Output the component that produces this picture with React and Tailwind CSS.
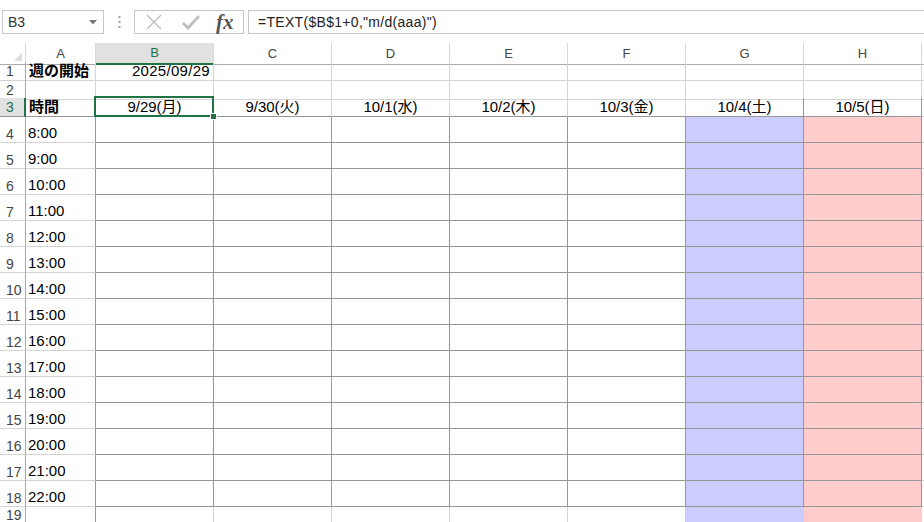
// 週間スケジュール表 — Excel 風のシート画面
import clsx from 'clsx'

const COLS = ['A', 'B', 'C', 'D', 'E', 'F', 'G', 'H']
const DAYS = ['9/29(月)', '9/30(火)', '10/1(水)', '10/2(木)', '10/3(金)', '10/4(土)', '10/5(日)']
const TIMES = Array.from({ length: 15 }, (_, i) => `${i + 8}:00`)

const ROW = 'grid grid-cols-[26px_70px_repeat(7,118px)_1fr]'
const LIGHT = 'border-r border-b border-[#d4d4d4]'
const DARK = 'border-r border-b border-[#969696]'

function RowHead({ n, active, className }) {
  return (
    <div className={clsx(
      'border-b border-[#d4d4d4] flex items-end pl-[6px] text-[14px]',
      active ? 'bg-[#e1e1e1] text-[#217346] border-r-2 border-r-[#217346]' : 'text-[#444] border-r border-r-[#a8a8a8]',
      className ?? 'leading-[18px]'
    )}>
      {n}
    </div>
  )
}

function Cell({ className, children }) {
  return (
    <div className={clsx('flex items-end overflow-hidden whitespace-nowrap leading-[18px]', className)}>
      {children}
    </div>
  )
}

export default function App() {
  return (
    <div className="w-[924px] h-[522px] overflow-hidden bg-white text-black text-[15px] font-['Liberation_Sans','Noto_Sans_CJK_JP',sans-serif]">

      {/* 名前ボックス＋数式バー */}
      <div className="h-[43px] flex items-start pt-[10px]">
        <div className="ml-[2px] w-[102px] h-[24px] border border-[#c6c6c6] flex items-center justify-between pl-[5px] pr-[6px] text-[14px] text-[#333]">
          <span>B3</span>
          <svg width="8" height="5" viewBox="0 0 8 5"><path d="M0 0h8L4 4.5z" fill="#777" /></svg>
        </div>
        <div className="w-[30px] h-[24px] flex items-center justify-center">
          <svg width="3" height="12" viewBox="0 0 3 12">
            <rect x="0.5" y="0" width="2" height="2" fill="#a0a0a0" />
            <rect x="0.5" y="5" width="2" height="2" fill="#a0a0a0" />
            <rect x="0.5" y="10" width="2" height="2" fill="#a0a0a0" />
          </svg>
        </div>
        <div className="w-[110px] h-[24px] border border-[#c6c6c6] flex items-center">
          <svg className="ml-[10px]" width="18" height="18" viewBox="0 0 18 18">
            <path d="M2 2l14 14M16 2L2 16" stroke="#bdbdbd" strokeWidth="1.4" fill="none" />
          </svg>
          <svg className="ml-[18px]" width="20" height="18" viewBox="0 0 20 18">
            <path d="M2 10l5 5L18 3" stroke="#bdbdbd" strokeWidth="2.6" fill="none" />
          </svg>
          <span className="ml-[15px] text-[21px] leading-none italic font-semibold text-[#555] font-['Liberation_Serif',serif]">fx</span>
        </div>
        <div className="ml-[4px] flex-1 h-[24px] border border-r-0 border-[#c6c6c6] flex items-center pl-[9px] text-[14px] text-[#222] tracking-[0.3px] whitespace-nowrap">
          =TEXT($B$1+0,"m/d(aaa)")
        </div>
      </div>

      {/* 列見出し */}
      <div className={clsx(ROW, 'h-[19px]')}>
        <div className="border-r border-b border-r-[#dadada] border-b-[#ababab] flex items-end justify-end pr-[3px] pb-[3px]">
          <svg width="8" height="8" viewBox="0 0 8 8"><path d="M8 0v8H0z" fill="#dcdcdc" /></svg>
        </div>
        {COLS.map(c => (
          <div key={c} className={clsx(
            'border-r border-r-[#dadada] flex items-center justify-center text-[13px]',
            c === 'B' ? 'bg-[#e1e1e1] text-[#217346] border-b-2 border-b-[#217346]' : 'text-[#444] border-b border-b-[#ababab]'
          )}>
            {c}
          </div>
        ))}
        <div className="border-b border-b-[#ababab]" />
      </div>

      {/* 1行目 */}
      <div className={clsx(ROW, 'h-[19px]')}>
        <RowHead n="1" />
        <Cell className={clsx(LIGHT, 'pl-[3px] font-bold')}>週の開始</Cell>
        <Cell className={clsx(LIGHT, 'justify-end pr-[3px] tracking-[0.3px]')}>2025/09/29</Cell>
        {DAYS.slice(1).map((_, i) => <Cell key={i} className={LIGHT} />)}
        <Cell className="border-b border-[#d4d4d4]" />
      </div>

      {/* 2行目 */}
      <div className={clsx(ROW, 'h-[17px]')}>
        <RowHead n="2" />
        {COLS.map(c => <Cell key={c} className={LIGHT} />)}
        <Cell className="border-b border-[#d4d4d4]" />
      </div>

      {/* 3行目：曜日見出し */}
      <div className={clsx(ROW, 'h-[19px]')}>
        <RowHead n="3" active className="border-b-[#969696] leading-[17px]" />
        <Cell className="border-r border-r-[#969696] border-b border-b-[#969696] pl-[3px] font-bold leading-[17px]">時間</Cell>
        {DAYS.map((d, i) => (
          <Cell key={d} className={clsx(
            'justify-center border-r border-b border-b-[#969696] leading-[17px]',
            i >= 5 ? 'border-r-[#969696]' : 'border-r-[#d4d4d4]',
            i === 0 && 'relative overflow-visible'
          )}>
            {d}
            {i === 0 && (
              <div className="absolute -left-[2px] -top-[2px] -right-[1px] -bottom-[1px] border-2 border-[#217346] z-10">
                <div className="absolute -right-[5px] -bottom-[5px] w-[7px] h-[7px] bg-[#217346] border border-white" />
              </div>
            )}
          </Cell>
        ))}
        <Cell className="border-b border-[#d4d4d4]" />
      </div>

      {/* 時間帯の行 */}
      {TIMES.map((t, r) => (
        <div key={t} className={clsx(ROW, 'h-[26px]')}>
          <RowHead n={r + 4} className="leading-[15px]" />
          <Cell className="border-r border-r-[#969696] border-b border-b-[#d4d4d4] pl-[2px] leading-[15px]">{t}</Cell>
          {DAYS.map((d, i) => (
            <Cell key={d} className={clsx(DARK, i === 5 && 'bg-[#ccccff]', i === 6 && 'bg-[#ffcccc]')} />
          ))}
          <Cell className="border-b border-[#d4d4d4]" />
        </div>
      ))}

      {/* 19行目 */}
      <div className={clsx(ROW, 'h-[16px]')}>
        <RowHead n="19" className="leading-[16px]" />
        <Cell className="border-r border-r-[#969696]" />
        {DAYS.map((d, i) => (
          <Cell key={d} className={clsx(
            'border-r',
            i < 4 && 'border-r-[#d4d4d4]',
            i === 4 && 'border-r-[#ccccff]',
            i === 5 && 'bg-[#ccccff] border-r-[#ccccff]',
            i === 6 && 'bg-[#ffcccc] border-r-[#ffcccc]'
          )} />
        ))}
        <Cell />
      </div>
    </div>
  )
}
